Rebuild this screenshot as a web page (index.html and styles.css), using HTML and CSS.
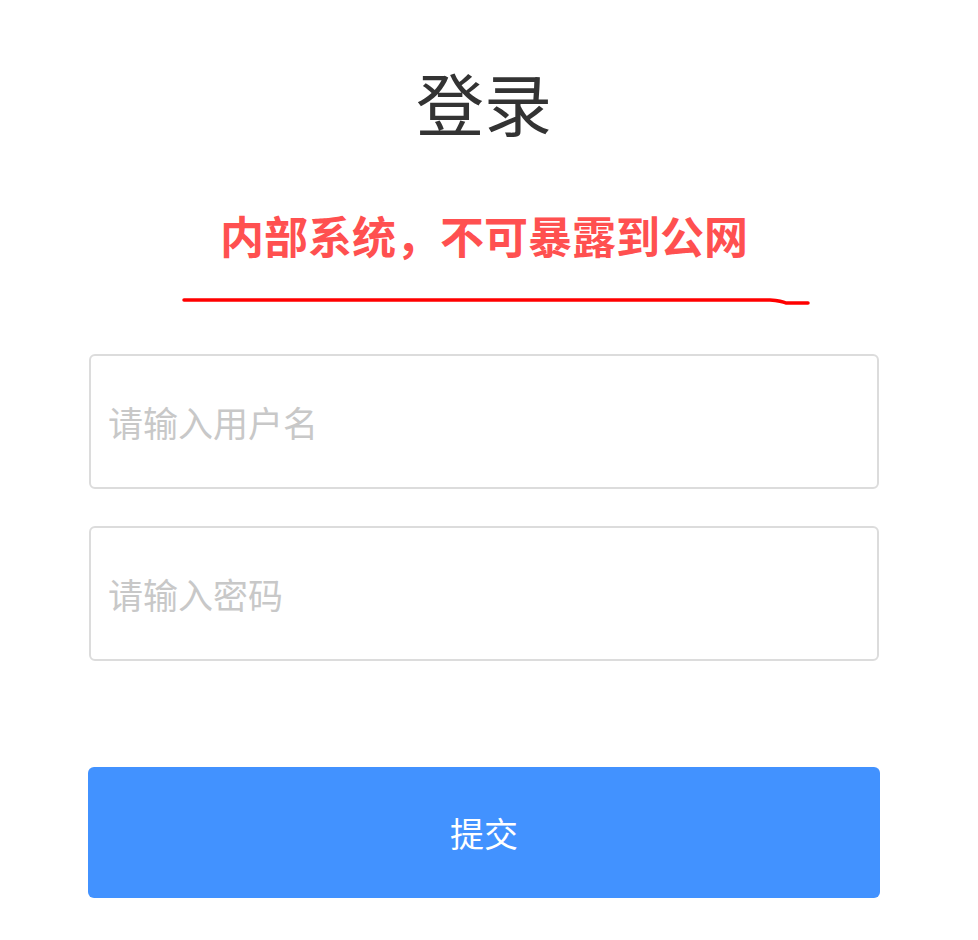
FILE: index.html
```html
<!DOCTYPE html>
<html lang="zh-CN">
<head>
  <meta charset="UTF-8">
  <meta name="viewport" content="width=device-width, initial-scale=1.0">
  <title>登录</title>
  <link rel="stylesheet" href="styles.css">
</head>
<body>
  <div class="login">
    <h1 class="title">登录</h1>

    <!-- 警告提示 + 手画的红线 -->
    <div class="warning">内部系统，不可暴露到公网</div>
    <svg class="underline" width="640" height="12" viewBox="0 0 640 12">
      <path d="M2 4 L588 4 Q600 5 604 7 L626 7" fill="none" stroke="#ff0000" stroke-width="3.5" stroke-linecap="round" stroke-linejoin="round"/>
    </svg>

    <form class="form" onsubmit="return false">
      <input class="field" type="text" placeholder="请输入用户名">
      <input class="field" type="password" placeholder="请输入密码">
      <button class="submit" type="submit">提交</button>
    </form>
  </div>
</body>
</html>
```

FILE: styles.css
```css
body {
  margin: 0;
  font-family: "Noto Sans CJK SC", "Noto Sans", sans-serif;
  background-color: #fff;
}
.login {
  width: 792px;
  margin-left: 88px;
  display: flex;
  flex-direction: column;
  align-items: center;
}
.title {
  margin: 68px 0 0;
  font-size: 68px;
  line-height: 68px;
  font-weight: 400;
  color: #333;
}
.warning {
  margin-top: 77px;
  font-size: 44px;
  line-height: 44px;
  font-weight: 700;
  color: #ff5050;
}
.underline {
  display: block;
  margin-top: 39px;
  margin-left: 94px;
  align-self: flex-start;
}
.form {
  width: 100%;
  margin-top: 46px;
  display: flex;
  flex-direction: column;
}
.field {
  box-sizing: border-box;
  width: 790px;
  height: 135px;
  margin-left: 1px;
  margin-bottom: 37px;
  padding: 0 17px;
  border: 2px solid #dcdcdc;
  border-radius: 6px;
  font-family: inherit;
  font-size: 35px;
  color: #333;
  outline: none;
}
.field::placeholder {
  color: #c8c8c8;
}
.submit {
  margin-top: 69px;
  height: 131px;
  border: none;
  border-radius: 6px;
  background-color: #4292ff;
  color: #fff;
  font-family: inherit;
  font-size: 34px;
  cursor: pointer;
}
```
